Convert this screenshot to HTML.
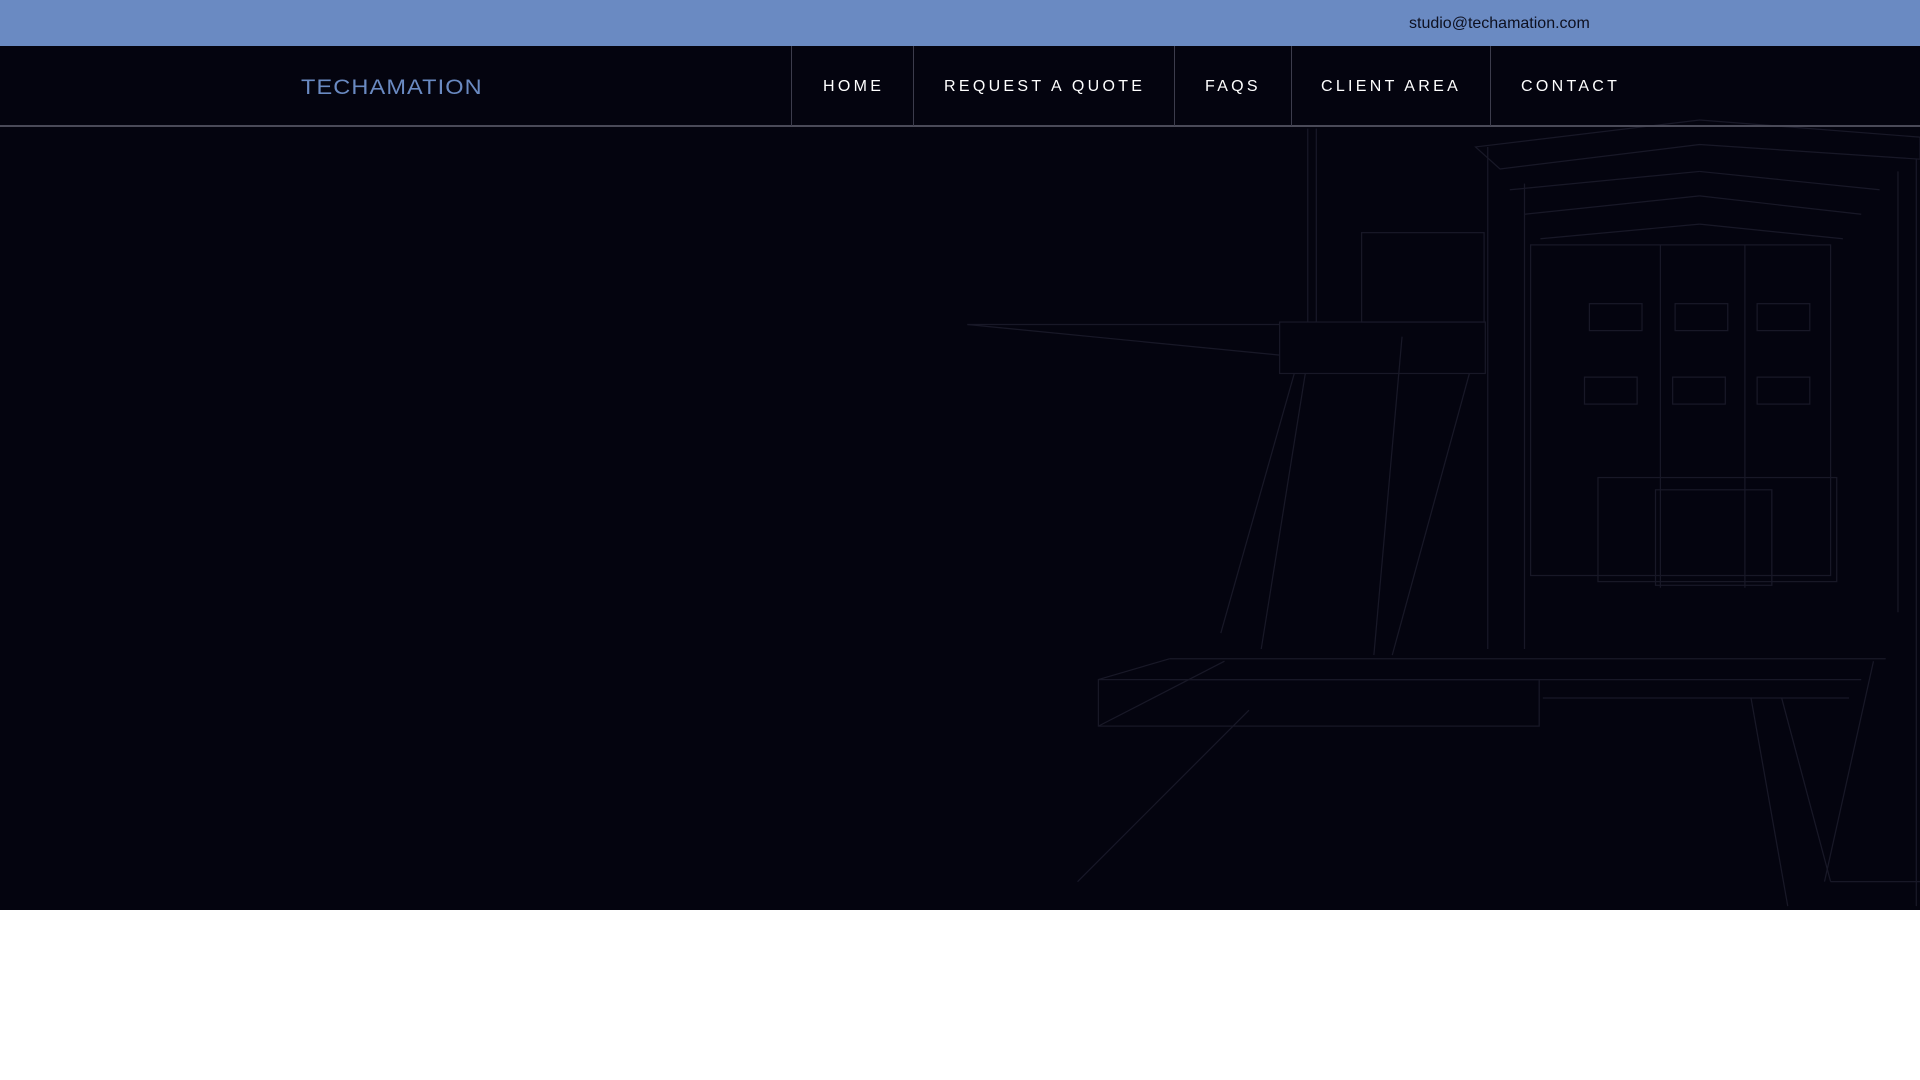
<!DOCTYPE html>
<html><head><meta charset="utf-8"><style>
*{margin:0;padding:0;box-sizing:border-box}
body{width:1920px;height:1080px;background:#fff;font-family:"Liberation Sans",sans-serif;position:relative;overflow:hidden}
.top{position:absolute;left:0;top:0;width:1920px;height:46px;background:#6a8ac2}
.email{position:absolute;left:1409px;top:15px;font-size:16px;color:#0d1020}
.hero{position:absolute;left:0;top:46px;width:1920px;height:864px;background:#04040f}
svg.bg{position:absolute;left:0;top:0;width:1920px;height:1080px}
.navline{position:absolute;left:0;top:125px;width:1920px;height:2px;background:#4a4a58}
.logo{position:absolute;left:301px;top:76px;font-size:21px;color:#6a8ac2;letter-spacing:1px;transform:scaleX(1.12);transform-origin:left}
.sep{position:absolute;top:46px;height:80px;width:1px;background:#3c3c4c}
.nav{position:absolute;top:78px;font-size:16px;color:#fff;letter-spacing:3.3px}
</style></head><body>
<div class="top"><div class="email">studio@techamation.com</div></div>
<div class="hero"></div>
<svg class="bg" viewBox="0 0 1568 882" preserveAspectRatio="none" fill="none" stroke="#2a2a3c" stroke-width="1">
<g opacity="0.55">
<rect x="897" y="555" width="360" height="38"/>
<line x1="955" y1="538" x2="1540" y2="538"/><line x1="955" y1="555" x2="1520" y2="555"/>
<line x1="897" y1="555" x2="955" y2="538"/>
<rect x="1045" y="263" width="168" height="42"/>
<line x1="790" y1="265" x2="1045" y2="265"/><line x1="790" y1="265" x2="1045" y2="290"/>
<line x1="1057" y1="305" x2="997" y2="517"/><line x1="1066" y1="305" x2="1030" y2="530"/>
<line x1="1145" y1="275" x2="1122" y2="535"/><line x1="1200" y1="305" x2="1137" y2="535"/>
<line x1="1068" y1="105" x2="1068" y2="263"/><line x1="1075" y1="105" x2="1075" y2="263"/>
<rect x="1112" y="190" width="100" height="73"/>
<polygon points="1205,120 1388,98 1568,112 1568,130 1388,118 1225,138"/>
<line x1="1233" y1="155" x2="1388" y2="140"/><line x1="1388" y1="140" x2="1535" y2="155"/>
<line x1="1245" y1="175" x2="1388" y2="160"/><line x1="1388" y1="160" x2="1520" y2="175"/>
<line x1="1258" y1="195" x2="1388" y2="183"/><line x1="1388" y1="183" x2="1505" y2="195"/>
<rect x="1250" y="200" width="245" height="270"/>
<line x1="1356" y1="200" x2="1356" y2="480"/><line x1="1425" y1="200" x2="1425" y2="480"/>
<rect x="1298" y="248" width="43" height="22"/><rect x="1368" y="248" width="43" height="22"/><rect x="1435" y="248" width="43" height="22"/>
<rect x="1294" y="308" width="43" height="22"/><rect x="1366" y="308" width="43" height="22"/><rect x="1435" y="308" width="43" height="22"/>
<rect x="1305" y="390" width="195" height="85"/><rect x="1352" y="400" width="95" height="78"/>
<line x1="1215" y1="120" x2="1215" y2="530"/><line x1="1245" y1="150" x2="1245" y2="530"/>
<line x1="1550" y1="140" x2="1550" y2="500"/><line x1="1565" y1="130" x2="1565" y2="740"/>
<line x1="1430" y1="570" x2="1460" y2="740"/><line x1="1455" y1="570" x2="1495" y2="720"/>
<line x1="1530" y1="540" x2="1490" y2="720"/><line x1="1495" y1="720" x2="1568" y2="720"/>
<line x1="1260" y1="570" x2="1510" y2="570"/>
<line x1="897" y1="593" x2="1000" y2="540"/><line x1="880" y1="720" x2="1020" y2="580"/>
</g>
</svg>
<div class="navline"></div>
<div class="logo">TECHAMATION</div>
<div class="sep" style="left:791px"></div>
<div class="sep" style="left:913px"></div>
<div class="sep" style="left:1174px"></div>
<div class="sep" style="left:1291px"></div>
<div class="sep" style="left:1490px"></div>
<div class="nav" style="left:823px">HOME</div>
<div class="nav" style="left:944px">REQUEST A QUOTE</div>
<div class="nav" style="left:1205px">FAQS</div>
<div class="nav" style="left:1321px">CLIENT AREA</div>
<div class="nav" style="left:1521px">CONTACT</div>
</body></html>
